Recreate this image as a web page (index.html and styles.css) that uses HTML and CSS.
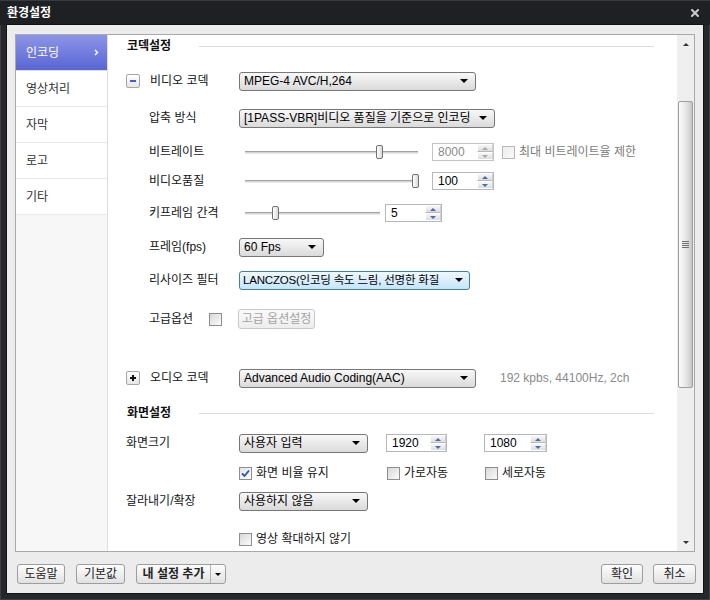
FILE: index.html
```html
<!DOCTYPE html>
<html lang="ko">
<head>
<meta charset="utf-8">
<title>환경설정</title>
<link rel="stylesheet" href="styles.css">
</head>
<body>
<div class="window">
  <header class="titlebar">
    <span class="title">환경설정</span>
    <span class="close"><svg width="8" height="8" viewBox="0 0 8 8"><path d="M1 1L7 7M7 1L1 7" stroke="#c9cacd" stroke-width="2" stroke-linecap="square"/></svg></span>
  </header>
  <div class="frame">
    <div class="panel">
      <nav class="sidebar">
        <div class="nav-item active"><span>인코딩</span><svg class="chev" width="5" height="7" viewBox="0 0 5 7"><path d="M1 1L3.5 3.5L1 6" fill="none" stroke="#fff" stroke-width="1.4"/></svg></div>
        <div class="nav-item"><span>영상처리</span></div>
        <div class="nav-item"><span>자막</span></div>
        <div class="nav-item"><span>로고</span></div>
        <div class="nav-item"><span>기타</span></div>
      </nav>

      <main class="content">
        <div class="row sec-head h-codec"><span class="sec-title">코덱설정</span><i class="rule"></i></div>

        <div class="row r-vcodec">
          <span class="toggle"><i class="minus"></i></span>
          <span class="lbl lbl-codec">비디오 코덱</span>
          <div class="select w-codec"><span class="sel-text">MPEG-4 AVC/H,264</span><i class="caret"></i></div>
        </div>

        <div class="row ind r-mode">
          <span class="lbl">압축 방식</span>
          <div class="select w-mode"><span class="sel-text">[1PASS-VBR]비디오 품질을 기준으로 인코딩</span><i class="caret"></i></div>
        </div>

        <div class="row ind r-bitrate">
          <span class="lbl">비트레이트</span>
          <div class="slider w-long"><i class="track" style="width:131px"></i><i class="thumb"></i><i class="track rest"></i></div>
          <div class="spin disabled w-62 after-long"><span class="val">8000</span><span class="arrows"><b class="up"></b><b class="dn"></b></span></div>
          <span class="check disabled max-rate"><i class="cb"></i><span class="ck-text">최대 비트레이트율 제한</span></span>
        </div>

        <div class="row ind r-quality">
          <span class="lbl">비디오품질</span>
          <div class="slider w-long"><i class="track" style="width:167px"></i><i class="thumb"></i><i class="track rest"></i></div>
          <div class="spin w-62 after-long"><span class="val">100</span><span class="arrows"><b class="up"></b><b class="dn"></b></span></div>
        </div>

        <div class="row ind r-key">
          <span class="lbl">키프레임 간격</span>
          <div class="slider w-short"><i class="track" style="width:27px"></i><i class="thumb"></i><i class="track rest"></i></div>
          <div class="spin w-57 after-short"><span class="val">5</span><span class="arrows"><b class="up"></b><b class="dn"></b></span></div>
        </div>

        <div class="row ind r-fps">
          <span class="lbl">프레임(fps)</span>
          <div class="select w-fps"><span class="sel-text">60 Fps</span><i class="caret"></i></div>
        </div>

        <div class="row ind r-resize">
          <span class="lbl">리사이즈 필터</span>
          <div class="select focus w-resize"><span class="sel-text tight">LANCZOS(인코딩 속도 느림, 선명한 화질</span><i class="caret"></i></div>
        </div>

        <div class="row ind r-adv">
          <span class="lbl lbl-adv">고급옵션</span>
          <i class="cb"></i>
          <span class="btn disabled adv-btn">고급 옵션설정</span>
        </div>

        <div class="row r-acodec">
          <span class="toggle"><i class="plus"></i></span>
          <span class="lbl lbl-codec">오디오 코덱</span>
          <div class="select w-codec"><span class="sel-text">Advanced Audio Coding(AAC)</span><i class="caret"></i></div>
          <span class="info">192 kpbs, 44100Hz, 2ch</span>
        </div>

        <div class="row sec-head h-screen"><span class="sec-title">화면설정</span><i class="rule"></i></div>

        <div class="row r-size">
          <span class="lbl lbl-sec">화면크기</span>
          <div class="select w-small"><span class="sel-text">사용자 입력</span><i class="caret"></i></div>
          <div class="spin w-61 sp-w"><span class="val">1920</span><span class="arrows"><b class="up"></b><b class="dn"></b></span></div>
          <div class="spin w-63 sp-h"><span class="val">1080</span><span class="arrows"><b class="up"></b><b class="dn"></b></span></div>
        </div>

        <div class="row r-checks">
          <span class="check grp-1"><i class="cb checked"><svg width="11" height="11" viewBox="0 0 11 11"><path d="M2 5.5L4.5 8L9 2.5" fill="none" stroke="#2f4fa8" stroke-width="1.8"/></svg></i><span class="ck-text">화면 비율 유지</span></span>
          <span class="check grp-2"><i class="cb"></i><span class="ck-text">가로자동</span></span>
          <span class="check"><i class="cb"></i><span class="ck-text">세로자동</span></span>
        </div>

        <div class="row r-crop">
          <span class="lbl lbl-sec">잘라내기/확장</span>
          <div class="select w-small"><span class="sel-text">사용하지 않음</span><i class="caret"></i></div>
        </div>

        <div class="row r-noscale">
          <span class="check ctl-start"><i class="cb"></i><span class="ck-text">영상 확대하지 않기</span></span>
        </div>
      </main>

      <div class="scrollbar">
        <span class="sb-btn"><i class="sb-up"></i></span>
        <div class="sb-track"><div class="sb-thumb"><i class="grip"></i></div></div>
        <span class="sb-btn"><i class="sb-down"></i></span>
      </div>
    </div>

    <footer class="footer">
      <div class="btn-group">
        <span class="btn w-help">도움말</span>
        <span class="btn w-default">기본값</span>
        <span class="btn split"><span class="split-main">내 설정 추가</span><span class="split-arrow"><i class="caret small"></i></span></span>
      </div>
      <div class="btn-group right">
        <span class="btn w-ok">확인</span>
        <span class="btn w-cancel">취소</span>
      </div>
    </footer>
  </div>
</div>
</body>
</html>
```

FILE: styles.css
```css
* { box-sizing: border-box; }
html, body { margin: 0; padding: 0; }
body {
  background: #232428;
  font-family: "Liberation Sans", "Noto Sans CJK KR", sans-serif;
  font-size: 12px;
  color: #141414;
}
i, b { display: block; font-style: normal; }

.window {
  width: 710px;
  height: 600px;
  display: flex;
  flex-direction: column;
  background: #26272b;
  box-shadow: inset 0 0 0 1px #3e3f44;
}

.titlebar {
  height: 25px;
  flex: none;
  display: flex;
  align-items: center;
  justify-content: space-between;
  padding: 0 11px 0 7px;
  background: #1f2024;
  border-top: 1px solid #3a3b40;
}
.title { color: #fff; font-weight: bold; font-size: 12px; line-height: 14px; }
.close svg { display: block; }

.frame {
  flex: 1;
  margin: 0 7px 7px;
  background: #ececec;
  padding: 9px 8px 0;
  display: flex;
  flex-direction: column;
  box-shadow: 0 0 0 1px #111215;
}

.panel {
  height: 518px;
  flex: none;
  display: flex;
  border: 1px solid #a9a9a9;
  background: #fff;
}

/* sidebar */
.sidebar {
  width: 92px;
  flex: none;
  background: #f7f7f7;
  border-right: 1px solid #dfdfdf;
}
.nav-item {
  height: 36px;
  display: flex;
  align-items: center;
  justify-content: space-between;
  padding: 0 8px 0 10px;
  background: #fff;
  border-bottom: 1px solid #e9e9e9;
  color: #333;
  line-height: 16px;
}
.nav-item.active {
  background: linear-gradient(#8d95e7, #5965d5);
  color: #fff;
  border-bottom-color: #dcdcdc;
}
.chev { display: block; }

/* content */
.content {
  flex: 1;
  min-width: 0;
  padding: 0 23px 0 18px;
  display: flex;
  flex-direction: column;
}
.row {
  display: flex;
  align-items: center;
  height: 20px;
  flex: none;
  white-space: nowrap;
  line-height: 16px;
}
.ind { padding-left: 23px; }

.sec-title { width: 73px; flex: none; font-weight: bold; color: #111; padding-left: 1px; }
.rule { flex: 1; height: 1px; background: #dcdcdc; }

.h-codec { margin-top: 1px; }
.r-vcodec { margin-top: 15px; }
.r-mode { margin-top: 17px; }
.r-bitrate { margin-top: 14px; }
.r-quality { margin-top: 9px; }
.r-key { margin-top: 12px; }
.r-fps { margin-top: 14px; }
.r-resize { margin-top: 13px; }
.r-adv { margin-top: 19px; }
.r-acodec { margin-top: 39px; }
.h-screen { margin-top: 15px; }
.r-size { margin-top: 10px; }
.r-checks { margin-top: 10px; padding-left: 113px; }
.r-crop { margin-top: 8px; }
.r-noscale { margin-top: 18px; }

.lbl { width: 90px; flex: none; color: #141414; }
.lbl-codec { width: 89px; }
.lbl-sec { width: 113px; }
.lbl-adv { width: 60px; }

/* toggle (+ / -) */
.toggle {
  width: 14px;
  height: 14px;
  flex: none;
  margin-right: 10px;
  border: 1px solid #a7a7a7;
  border-radius: 2px;
  background: linear-gradient(#ffffff, #e6e6e6);
  display: flex;
  align-items: center;
  justify-content: center;
}
.minus { width: 6px; height: 2px; background: #4a5ad6; }
.plus { width: 6px; height: 6px;
  background:
    linear-gradient(#111, #111) center / 6px 2px no-repeat,
    linear-gradient(#111, #111) center / 2px 6px no-repeat; }

/* select */
.select {
  height: 19px;
  flex: none;
  display: flex;
  align-items: center;
  padding: 0 7px 0 4px;
  border: 1px solid #777;
  border-radius: 3px;
  background: linear-gradient(#f8f8f8, #dadada);
  color: #000;
}
.select.focus {
  border-color: #3c7fb1;
  background: linear-gradient(#eef7fd, #c6e5f7);
  padding: 0 6px 0 3px;
}
.sel-text { flex: 1; min-width: 0; overflow: hidden; }
.sel-text.tight { font-size: 11.5px; letter-spacing: -0.2px; }
.caret {
  flex: none;
  margin-left: 4px;
  width: 0; height: 0;
  border-left: 4px solid transparent;
  border-right: 4px solid transparent;
  border-top: 4px solid #000;
}
.select.focus .caret { margin-left: 2px; }
.caret.small {
  margin: 0;
  border-left-width: 3px;
  border-right-width: 3px;
  border-top-width: 3px;
}
.w-codec { width: 237px; }
.w-mode { width: 256px; }
.w-fps { width: 85px; }
.w-resize { width: 231px; }
.w-small { width: 129px; }

/* slider */
.slider {
  flex: none;
  display: flex;
  align-items: center;
  margin-left: 6px;
  height: 16px;
}
.w-long { width: 173px; }
.w-short { width: 135px; }
.track {
  flex: none;
  height: 3px;
  border-top: 1px solid #a2a2a2;
  border-bottom: 1px solid #e8e8e8;
  background: #d6d6d6;
}
.track.rest { flex: 1; }
.thumb {
  flex: none;
  width: 7px;
  height: 14px;
  border: 1px solid #707070;
  border-radius: 2px;
  background: linear-gradient(90deg, #ffffff, #d9d9d9);
}

/* spinbox */
.spin {
  flex: none;
  height: 18px;
  display: flex;
  border: 1px solid #b3b8c0;
  background: #fff;
  color: #000;
}
.spin .val { flex: 1; padding-left: 5px; line-height: 16px; }
.spin .arrows {
  width: 16px;
  flex: none;
  display: flex;
  flex-direction: column;
}
.arrows b {
  flex: 1;
  display: flex;
  align-items: center;
  justify-content: center;
  background: linear-gradient(#f7f7f7, #dcdde0);
  border: 1px solid #fff;
  border-right-color: #d0d0d0;
}
.arrows .up { border-bottom: 1px solid #b8b8b8; }
.arrows .up::after {
  content: "";
  border-left: 3px solid transparent;
  border-right: 3px solid transparent;
  border-bottom: 3px solid #4e69a8;
}
.arrows .dn::after {
  content: "";
  border-left: 3px solid transparent;
  border-right: 3px solid transparent;
  border-top: 3px solid #4e69a8;
}
.spin.disabled { border-color: #c4c4c4; color: #8a8a8a; }
.spin.disabled .up::after { border-bottom-color: #a9a9a9; }
.spin.disabled .dn::after { border-top-color: #a9a9a9; }
.w-62 { width: 62px; }
.w-57 { width: 57px; }
.w-61 { width: 61px; }
.w-63 { width: 63px; }
.after-long { margin-left: 14px; }
.after-short { margin-left: 5px; }
.sp-w { margin-left: 18px; }
.sp-h { margin-left: 37px; }

/* checkbox */
.check { display: flex; align-items: center; flex: none; }
.cb {
  width: 13px;
  height: 13px;
  flex: none;
  border: 1px solid #8e8e8e;
  background: linear-gradient(135deg, #d8d8d8, #fbfbfb);
  display: flex;
  align-items: center;
  justify-content: center;
}
.cb.checked { background: linear-gradient(135deg, #e4e4e4, #fdfdfd); }
.cb svg { display: block; }
.ck-text { margin-left: 4px; }
.check.disabled .cb { border-color: #b9b9b9; background: linear-gradient(135deg, #ececec, #fafafa); }
.check.disabled .ck-text { color: #7c7c7c; }
.max-rate { margin-left: 8px; }
.grp-1 { width: 148px; }
.grp-2 { width: 98px; }
.ctl-start { margin-left: 113px; }

.info { margin-left: 24px; color: #8a8a8a; }

/* buttons */
.btn {
  height: 20px;
  flex: none;
  display: flex;
  align-items: center;
  justify-content: center;
  border: 1px solid #9d9d9d;
  border-radius: 3px;
  background: linear-gradient(#fdfdfd, #e1e1e1);
  color: #222;
  line-height: 16px;
}
.btn.disabled {
  border-color: #c9c9c9;
  background: linear-gradient(#fafafa, #ededed);
  color: #a3a3a3;
}
.adv-btn { width: 77px; margin-left: 16px; }

/* scrollbar */
.scrollbar {
  width: 17px;
  flex: none;
  background: #efefef;
  display: flex;
  flex-direction: column;
}
.sb-btn {
  height: 18px;
  flex: none;
  display: flex;
  align-items: center;
  justify-content: center;
}
.sb-up {
  width: 0; height: 0;
  border-left: 3px solid transparent;
  border-right: 3px solid transparent;
  border-bottom: 3px solid #333;
}
.sb-down {
  width: 0; height: 0;
  border-left: 3px solid transparent;
  border-right: 3px solid transparent;
  border-top: 3px solid #333;
}
.sb-track { flex: 1; padding: 48px 1px 0 1px; }
.sb-thumb {
  height: 287px;
  border: 1px solid #9e9e9e;
  border-radius: 2px;
  background: linear-gradient(90deg, #fbfbfb, #e6e6e6 55%, #c6c6c6);
  display: flex;
  align-items: center;
  justify-content: center;
}
.grip {
  width: 7px;
  height: 7px;
  background: repeating-linear-gradient(#6f6f6f 0 1px, transparent 1px 2px);
}

/* footer */
.footer {
  flex: 1;
  display: flex;
  justify-content: space-between;
  padding: 12px 0 0 2px;
  margin-right: -1px;
}
.btn-group { display: flex; align-items: flex-start; gap: 11px; }
.btn-group.right { gap: 10px; }
.w-help { width: 48px; }
.w-default { width: 49px; }
.w-ok { width: 42px; }
.w-cancel { width: 43px; }
.split { width: 90px; justify-content: flex-start; padding: 0; }
.split-main { flex: 1; text-align: center; font-weight: bold; color: #222; }
.split-arrow {
  width: 15px;
  height: 100%;
  flex: none;
  display: flex;
  align-items: center;
  justify-content: center;
  border-left: 1px solid #b4b4b4;
}
```
